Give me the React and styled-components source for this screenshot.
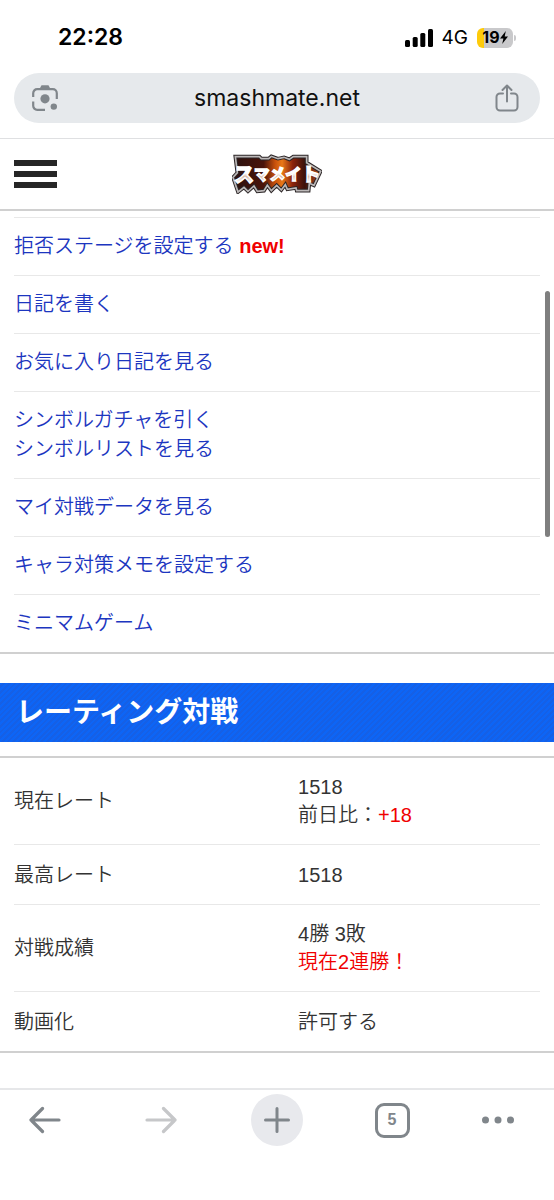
import styled, { createGlobalStyle } from 'styled-components'

const GlobalStyle = createGlobalStyle`
    * {
        box-sizing: border-box;
    }
    body {
        margin: 0;
        background-color: #fff;
        color: #333;
        font-family: "Liberation Sans", "Noto Sans CJK JP", sans-serif;
        font-size: 20px;
        font-weight: 350;
        line-height: 29px;
    }
    button {
        padding: 0;
        border: 0;
        background: none;
        font: inherit;
        cursor: pointer;
    }
    svg {
        display: block;
    }
`

const Page = styled.div`
    display: flex;
    flex-direction: column;
    min-height: 100vh;
`

const StatusBar = styled.div`
    display: flex;
    justify-content: space-between;
    align-items: center;
    height: 73px;
    padding: 2px 38px 0 58px;
    color: #000;
    font-family: Inter, sans-serif;
`

const Clock = styled.time`
    font-size: 23px;
    font-weight: 600;
`

const StatusIcons = styled.div`
    display: flex;
    align-items: center;
    gap: 9px;
`

const Network = styled.span`
    font-size: 19px;
    font-weight: 400;
`

const Battery = styled.span`
    display: flex;
    align-items: center;
    justify-content: center;
    width: 36px;
    height: 20px;
    border-radius: 6px;
    background: linear-gradient(to right, #fecb0b 20%, #c9c9cb 20%);
    font-size: 16px;
    font-weight: 700;
`

const BatteryGroup = styled.div`
    display: flex;
    align-items: center;
    gap: 1px;
`

const BatteryTip = styled.span`
    width: 2px;
    height: 6px;
    border-radius: 0 2px 2px 0;
    background-color: #c9c9cb;
`

const AddressArea = styled.div`
    padding: 0 14px 15px;
    border-bottom: 1px solid #dfe0e2;
`

const AddressBar = styled.div`
    display: flex;
    justify-content: space-between;
    align-items: center;
    height: 50px;
    padding: 0 21px 0 17px;
    border-radius: 25px;
    background-color: #e6e9ec;
`

const Address = styled.button`
    flex: 1;
    color: #111;
    font-family: Inter, sans-serif;
    font-size: 23px;
    font-weight: 400;
`

const SiteHeader = styled.header`
    display: grid;
    grid-template-columns: 1fr auto 1fr;
    align-items: center;
    height: 72px;
    padding: 0 14px;
    border-bottom: 2px solid #d0d0d0;
`

const MenuButton = styled.button`
    display: flex;
    flex-direction: column;
    gap: 5px;
    width: 43px;
`

const MenuLine = styled.span`
    height: 6px;
    background-color: #262626;
`

const Main = styled.main`
    position: relative;
    flex: 1;
    padding-top: 6px;
`

const ScrollThumb = styled.div`
    position: absolute;
    top: 80px;
    right: 4px;
    width: 5px;
    height: 246px;
    border-radius: 3px;
    background-color: #7f7f7f;
`

const LinkList = styled.ul`
    margin: 0;
    padding: 0 14px;
    list-style: none;
    border-bottom: 2px solid #d0d0d0;
`

const LinkItem = styled.li`
    padding: 14px 0;
    border-top: 1px solid #e8e8e8;
`

const MenuLink = styled.a`
    display: block;
    color: #1c36c0;
    text-decoration: none;
`

const New = styled.strong`
    color: #f00000;
    font-weight: 700;
`

const SectionTitle = styled.h2`
    margin: 29px 0 14px;
    padding: 0 16px;
    background: repeating-linear-gradient(135deg, #0d65f6 0 2px, #1560e6 2px 4px);
    color: #fff;
    font-size: 28px;
    font-weight: 700;
    line-height: 59px;
`

const TableWrap = styled.div`
    padding: 0 14px;
    border-top: 2px solid #d0d0d0;
    border-bottom: 2px solid #d0d0d0;
`

const Table = styled.table`
    width: 100%;
    border-collapse: separate;
    border-spacing: 0;
    line-height: 28px;

    tr:last-child > * {
        height: 59px;
        border-bottom: 0;
    }
`

const Label = styled.th`
    width: 54%;
    height: 60px;
    padding: 15px 0;
    border-bottom: 1px solid #e8e8e8;
    font-weight: inherit;
    text-align: left;
`

const Value = styled.td`
    padding: 15px 0;
    border-bottom: 1px solid #e8e8e8;
`

const Highlight = styled.span`
    color: #f00000;
`

const Toolbar = styled.nav`
    display: grid;
    grid-template-columns: 90fr 142fr 90fr 140fr 72fr;
    justify-items: center;
    align-items: center;
    align-content: start;
    height: 112px;
    padding: 4px 20px 0 0;
    border-top: 2px solid #e6e7e9;
`

const NewTab = styled.button`
    display: flex;
    align-items: center;
    justify-content: center;
    width: 52px;
    height: 52px;
    border-radius: 50%;
    background-color: #e8e9ed;
`

const TabCount = styled.button`
    width: 35px;
    height: 35px;
    border: 3px solid #80868b;
    border-radius: 9px;
    color: #80868b;
    font-size: 16px;
    font-weight: 700;
    line-height: 28px;
`

const LogoLetters = styled.text`
    fill: url(#face);
    stroke: #fff;
    stroke-width: 4px;
    font-family: "Noto Sans CJK JP", sans-serif;
    font-weight: 900;
`

const links = [
    [{ text: '拒否ステージを設定する', isNew: true }],
    [{ text: '日記を書く' }],
    [{ text: 'お気に入り日記を見る' }],
    [{ text: 'シンボルガチャを引く' }, { text: 'シンボルリストを見る' }],
    [{ text: 'マイ対戦データを見る' }],
    [{ text: 'キャラ対策メモを設定する' }],
    [{ text: 'ミニマムゲーム' }],
]

function SignalIcon() {
    return (
        <svg width="28" height="18" viewBox="0 0 28 18">
            <rect x="0" y="11" width="5" height="7" rx="1.5" />
            <rect x="7.7" y="8" width="5" height="10" rx="1.5" />
            <rect x="15.3" y="4" width="5" height="14" rx="1.5" />
            <rect x="23" y="0" width="5" height="18" rx="1.5" />
        </svg>
    )
}

function BoltIcon() {
    return (
        <svg width="8" height="13" viewBox="0 0 8 13">
            <path d="M5.8 0 0 7.4h3.4L2.2 13 8 5.4H4.7Z" />
        </svg>
    )
}

function LensIcon() {
    return (
        <svg width="28" height="28" viewBox="0 0 28 28" fill="none" stroke="#80868b" strokeWidth="2.2">
            <path d="M2.2 13V9.2a4 4 0 0 1 4-4h15.6a4 4 0 0 1 4 4V15M2.2 17.5v4.3a4 4 0 0 0 4 4H14" />
            <path d="m8.5 5 2-3.8h7l2 3.8Z" fill="#80868b" stroke="none" />
            <circle cx="14" cy="14.8" r="4.6" fill="#80868b" stroke="none" />
            <circle cx="22.8" cy="22.6" r="3.2" fill="#80868b" stroke="none" />
        </svg>
    )
}

function ShareIcon() {
    return (
        <svg width="24" height="28" viewBox="0 0 24 28" fill="none" stroke="#80868b" strokeWidth="2" strokeLinecap="round">
            <path d="M8 9.5H5a3.5 3.5 0 0 0-3.5 3.5v10A3.5 3.5 0 0 0 5 26.5h14a3.5 3.5 0 0 0 3.5-3.5V13A3.5 3.5 0 0 0 19 9.5h-3" />
            <path d="M12 17.5V2M7.5 6 12 1.5 16.5 6" strokeLinejoin="round" />
        </svg>
    )
}

function ArrowIcon({ forward }) {
    return (
        <svg width="32" height="28" viewBox="0 0 32 28" fill="none" stroke={forward ? '#c6c7c9' : '#80868b'} strokeWidth="3.2" strokeLinecap="round" strokeLinejoin="round">
            <path d={forward ? 'M2 14h28M18.5 2.5 30 14 18.5 25.5' : 'M30 14H2M13.5 2.5 2 14l11.5 11.5'} />
        </svg>
    )
}

function PlusIcon() {
    return (
        <svg width="26" height="26" viewBox="0 0 26 26" stroke="#80868b" strokeWidth="3" strokeLinecap="round">
            <path d="M13 1.5v23M1.5 13h23" />
        </svg>
    )
}

function DotsIcon() {
    return (
        <svg width="34" height="8" viewBox="0 0 34 8" fill="#80868b">
            <circle cx="4.5" cy="4" r="3.5" />
            <circle cx="17" cy="4" r="3.5" />
            <circle cx="29.5" cy="4" r="3.5" />
        </svg>
    )
}

function Logo() {
    const edge = 'M40 32 112 32 118 38 140 38 148 31 168 38 186 34 202 40 214 32 254 32 254 50 296 76 276 118 262 112 260 134 224 134 222 126 196 130 190 116 178 132 164 118 148 134 136 118 126 134 106 136 96 120 78 136 66 124 48 138 33 94 46 80Z'
    return (
        <svg width="90" height="40" viewBox="30 24 270 120" role="img" aria-label="スマメイト">
            <defs>
                <linearGradient id="fire" x1="0" x2="1">
                    <stop offset="0" stopColor="#2a1210" />
                    <stop offset=".35" stopColor="#4a140a" />
                    <stop offset=".48" stopColor="#c8500c" />
                    <stop offset=".56" stopColor="#e87818" />
                    <stop offset=".68" stopColor="#8c240c" />
                    <stop offset=".82" stopColor="#3a120c" />
                    <stop offset="1" stopColor="#c8501c" />
                </linearGradient>
                <linearGradient id="face" x1="0" x2="0" y1="0" y2="1">
                    <stop offset=".5" stopColor="#fff" />
                    <stop offset=".62" stopColor="#d8b8a8" />
                    <stop offset=".8" stopColor="#fff" />
                </linearGradient>
            </defs>
            <path d={edge} fill="url(#fire)" stroke="#2b2526" strokeWidth="11" />
            <path d={edge} fill="none" stroke="#bcb8b8" strokeWidth="5" />
            <LogoLetters x="36" y="107">
                <tspan fontSize="60">ス</tspan>
                <tspan fontSize="46" dy="-5">マ</tspan>
                <tspan fontSize="48">メ</tspan>
                <tspan fontSize="48">イ</tspan>
                <tspan fontSize="56" dy="3">ト</tspan>
            </LogoLetters>
        </svg>
    )
}

function App() {
    return (
        <Page>
            <GlobalStyle />
            <StatusBar>
                <Clock>22:28</Clock>
                <StatusIcons>
                    <SignalIcon />
                    <Network>4G</Network>
                    <BatteryGroup>
                        <Battery>19<BoltIcon /></Battery>
                        <BatteryTip />
                    </BatteryGroup>
                </StatusIcons>
            </StatusBar>
            <AddressArea>
                <AddressBar>
                    <button aria-label="カメラ検索"><LensIcon /></button>
                    <Address>smashmate.net</Address>
                    <button aria-label="共有"><ShareIcon /></button>
                </AddressBar>
            </AddressArea>
            <SiteHeader>
                <MenuButton aria-label="メニュー">
                    <MenuLine />
                    <MenuLine />
                    <MenuLine />
                </MenuButton>
                <a href="#top"><Logo /></a>
            </SiteHeader>
            <Main>
                <LinkList>
                    {links.map((group) => (
                        <LinkItem key={group[0].text}>
                            {group.map(({ text, isNew }) => (
                                <MenuLink href="#menu" key={text}>
                                    {text}{isNew && <> <New>new!</New></>}
                                </MenuLink>
                            ))}
                        </LinkItem>
                    ))}
                </LinkList>
                <SectionTitle>レーティング対戦</SectionTitle>
                <TableWrap>
                    <Table>
                        <tbody>
                            <tr>
                                <Label scope="row">現在レート</Label>
                                <Value>1518<br />前日比：<Highlight>+18</Highlight></Value>
                            </tr>
                            <tr>
                                <Label scope="row">最高レート</Label>
                                <Value>1518</Value>
                            </tr>
                            <tr>
                                <Label scope="row">対戦成績</Label>
                                <Value>4勝 3敗<br /><Highlight>現在2連勝！</Highlight></Value>
                            </tr>
                            <tr>
                                <Label scope="row">動画化</Label>
                                <Value>許可する</Value>
                            </tr>
                        </tbody>
                    </Table>
                </TableWrap>
                <ScrollThumb />
            </Main>
            <Toolbar>
                <button aria-label="戻る"><ArrowIcon /></button>
                <button aria-label="進む"><ArrowIcon forward /></button>
                <NewTab aria-label="新しいタブ"><PlusIcon /></NewTab>
                <TabCount aria-label="タブ 5">5</TabCount>
                <button aria-label="その他"><DotsIcon /></button>
            </Toolbar>
        </Page>
    )
}

export default App
